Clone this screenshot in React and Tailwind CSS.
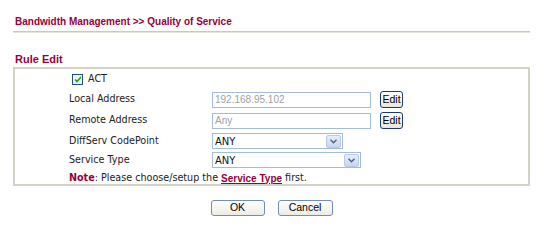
export default function App() {
  const label = "w-[143px] shrink-0 text-[9.6px] text-[#222] font-['DejaVu_Sans',sans-serif]";
  const arrow = (
    <span className="flex h-[13px] w-[15px] items-center justify-center rounded-[2px] border border-[#b7cbe8] bg-gradient-to-b from-[#e6eefb] to-[#c6d6f2]">
      <svg width="7" height="5" viewBox="0 0 7 5"><path d="M0.5 0.8 L3.5 3.8 L6.5 0.8" fill="none" stroke="#4d6185" strokeWidth="1.4" /></svg>
    </span>
  );
  const editBtn = "ml-[9px] flex h-[17px] w-[23px] items-center justify-center rounded-[3px] border border-[#1c3c70] bg-gradient-to-b from-white to-[#e8e6dc] text-[10.5px] text-black";
  return (
    <div className="h-[247px] w-[550px] bg-white pl-[13px] font-['Liberation_Sans',Arial,sans-serif]">
      <div className="w-[517px]">
        <div className="pl-[2px] pt-[15px] text-[10px] font-bold leading-[13px] text-[#99003a]">Bandwidth Management &gt;&gt; Quality of Service</div>
        <div className="mt-[3px] h-[2px] border-t border-[#c9c9c1] bg-[#e4e4dc]"></div>
        <div className="mt-[19px] pl-[2px] text-[11px] font-bold leading-[14px] text-[#99003a]">Rule Edit</div>
        <div className="mt-[1px] h-[119px] border-2 border-[#d3d3c8] pl-[54px]">
          <div className="flex h-[20px] items-center pl-[3px] pt-[1px]">
            <span className="flex h-[11px] w-[11px] items-center justify-center border border-[#1c5180] bg-[#eef2f6]">
              <svg width="8" height="7" viewBox="0 0 8 7"><path d="M1 3.5 L3 5.5 L7 1" fill="none" stroke="#21a121" strokeWidth="1.6" /></svg>
            </span>
            <span className="ml-[5px] text-[9.6px] text-[#222] font-['DejaVu_Sans',sans-serif]">ACT</span>
          </div>
          <div className="flex h-[21px] items-center">
            <span className={label}>Local Address</span>
            <span className="flex h-[16px] w-[159px] items-center border border-[#a5bcd6] px-[2px] text-[10px] text-[#a0a0a0]">192.168.95.102</span>
            <span className={editBtn}>Edit</span>
          </div>
          <div className="flex h-[21px] items-center">
            <span className={label}>Remote Address</span>
            <span className="flex h-[16px] w-[159px] items-center border border-[#a5bcd6] px-[2px] text-[10px] text-[#a0a0a0]">Any</span>
            <span className={editBtn}>Edit</span>
          </div>
          <div className="flex h-[20px] items-center">
            <span className={label}>DiffServ CodePoint</span>
            <span className="flex h-[16px] w-[131px] items-center justify-between border border-[#a5bcd6] pl-[2px] pr-[1px] text-[10px] text-[#111] font-['DejaVu_Sans',sans-serif]">ANY{arrow}</span>
          </div>
          <div className="flex h-[18px] items-center">
            <span className={label}>Service Type</span>
            <span className="flex h-[16px] w-[149px] items-center justify-between border border-[#a5bcd6] pl-[2px] pr-[1px] text-[10px] text-[#111] font-['DejaVu_Sans',sans-serif]">ANY{arrow}</span>
          </div>
          <div className="flex h-[18px] items-center text-[9.6px] text-[#222] font-['DejaVu_Sans',sans-serif] whitespace-pre">
            <span className="font-bold text-[#99003a]">Note</span>
            <span>: Please choose/setup the </span>
            <span className="font-['Liberation_Sans',Arial,sans-serif] text-[10px] font-bold text-[#99003a] underline">Service Type</span>
            <span> first.</span>
          </div>
        </div>
        <div className="mt-[14px] flex justify-center gap-[13px]">
          <span className="flex h-[16px] w-[54px] items-center justify-center rounded-[3px] border border-[#6f8db5] bg-gradient-to-b from-white to-[#ecebe4] text-[10.5px] text-black">OK</span>
          <span className="flex h-[16px] w-[55px] items-center justify-center rounded-[3px] border border-[#6f8db5] bg-gradient-to-b from-white to-[#ecebe4] text-[10.5px] text-black">Cancel</span>
        </div>
      </div>
    </div>
  );
}
